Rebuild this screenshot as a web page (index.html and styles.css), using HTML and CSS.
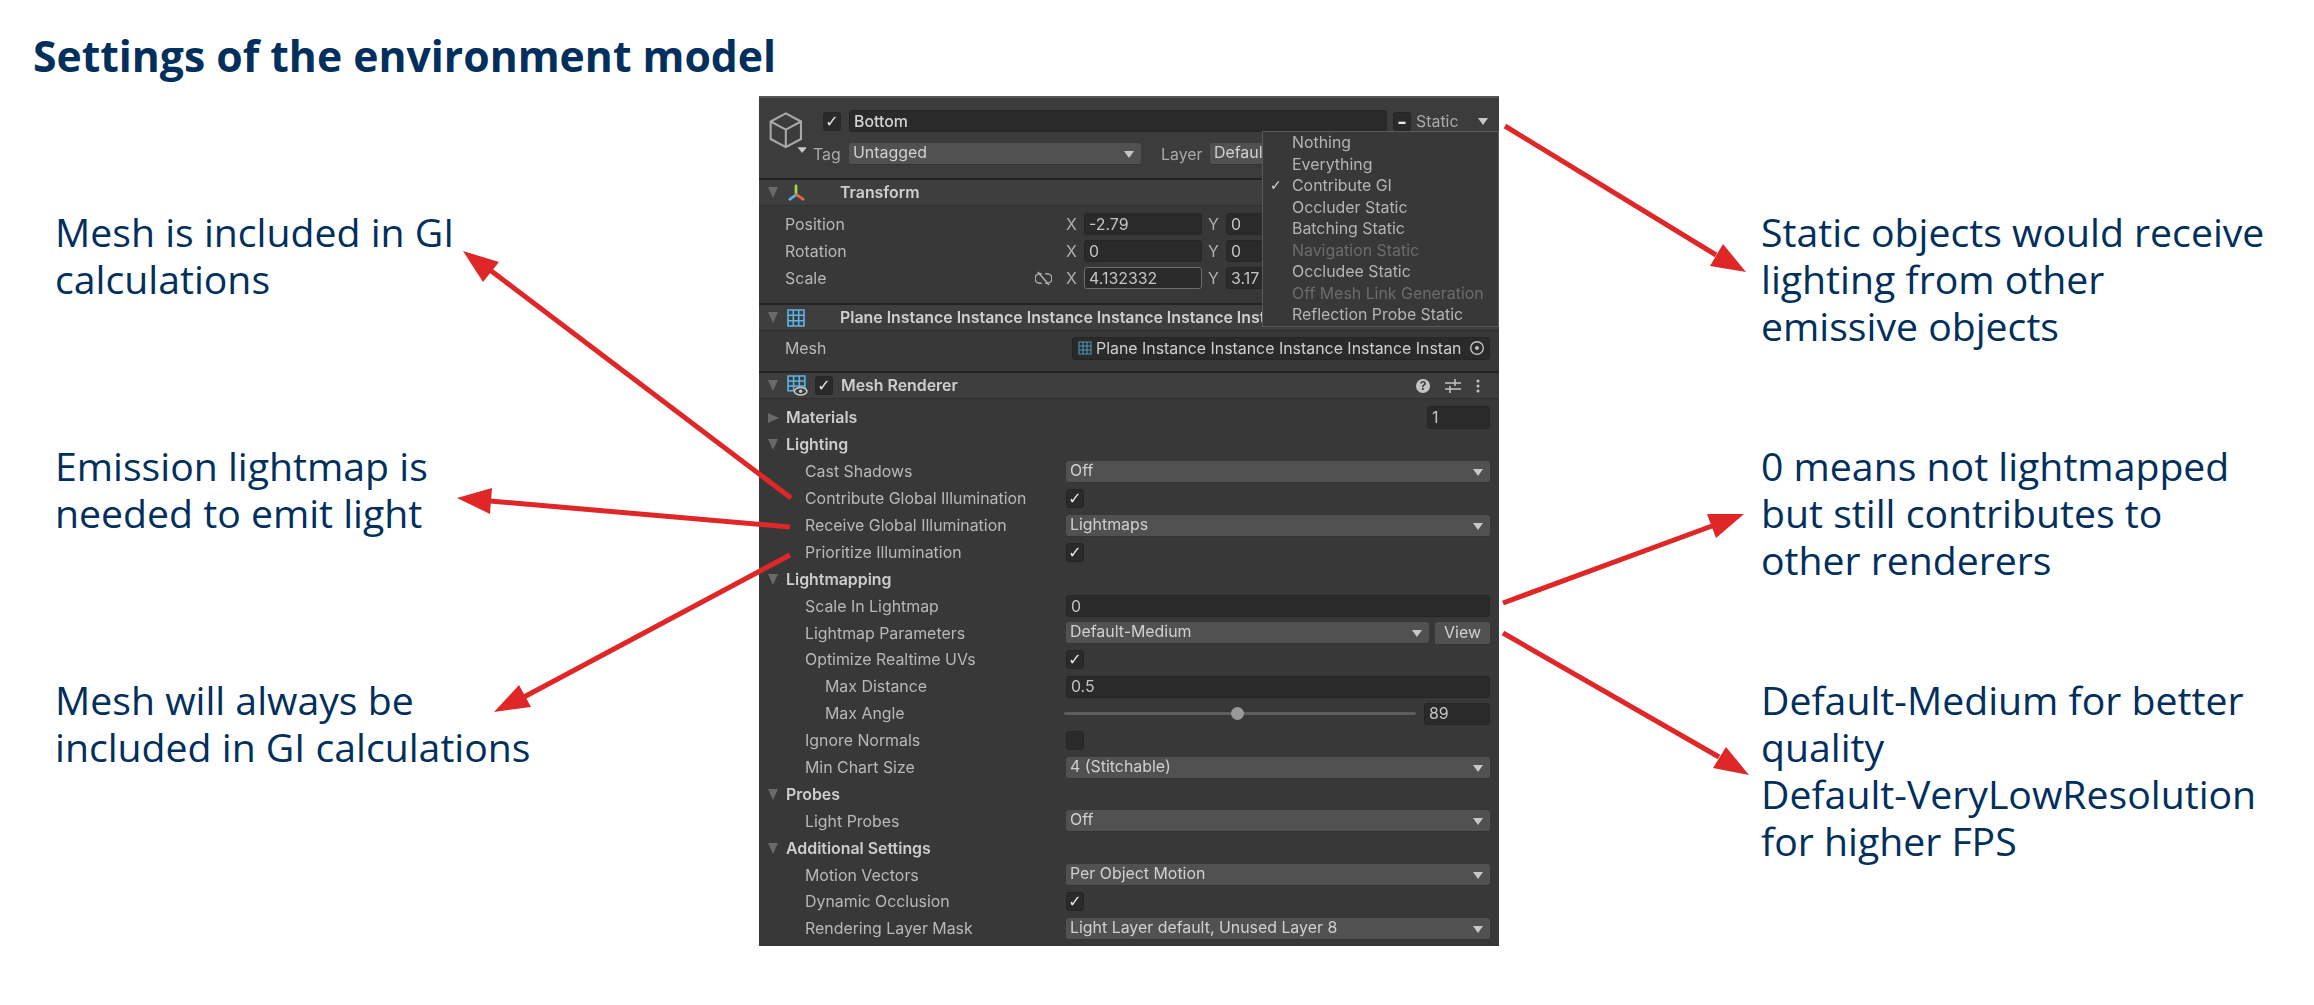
FILE: index.html
```html
<!DOCTYPE html>
<html lang="en">
<head>
  <meta charset="UTF-8" />
  <title>Settings of the environment model</title>
  <link rel="stylesheet" href="styles.css">
</head>
<body>
  <h1 class="title">Settings of the environment model</h1>

  <div class="content">
    <div class="notes notes-left">
      <p class="note">Mesh is included in GI<br>calculations</p>
      <p class="note">Emission lightmap is<br>needed to emit light</p>
      <p class="note">Mesh will always be<br>included in GI calculations</p>
    </div>

    <div class="panel">
      <div class="go-head">
        <svg class="go-icon" viewBox="0 0 32 36" fill="none" stroke="#a8a8a8" stroke-width="1.8">
          <path d="M15 2 L28 9 V24 L15 31 L2 24 V9 Z M2 9 L15 16 L28 9 M15 16 V31"/>
          <path d="M25 31 h8 l-4 5 z" fill="#c8c8c8" stroke="none"/>
        </svg>
        <div class="go-rows">
          <div class="go-row">
            <span class="check on">✓</span>
            <span class="input name-input">Bottom</span>
            <span class="check dash">–</span>
            <span class="static-label">Static</span>
            <span class="arrow-down static-arrow"></span>
          </div>
          <div class="go-row tag-row">
            <span class="tag-label">Tag</span>
            <span class="select tag-select">Untagged<i class="arrow-down"></i></span>
            <span class="layer-label">Layer</span>
            <span class="select layer-select">Default</span>
          </div>
        </div>
      </div>

      <div class="comp-head">
        <i class="fold"></i>
        <svg class="comp-icon" viewBox="0 0 20 20" fill="none" stroke-width="3" stroke-linecap="round">
          <path d="M10 2 V10" stroke="#a6d94c"/>
          <path d="M10 12 L3 17" stroke="#58b4e8"/>
          <path d="M11 12 L18 17" stroke="#e8683c"/>
        </svg>
        <span class="comp-title">Transform</span>
      </div>
      <div class="comp-body transform-body">
        <div class="row">
          <span class="label lvl1 tf-label">Position</span>
          <span class="axis">X</span><span class="input tf-input">-2.79</span>
          <span class="axis">Y</span><span class="input tf-input">0</span>
        </div>
        <div class="row">
          <span class="label lvl1 tf-label">Rotation</span>
          <span class="axis">X</span><span class="input tf-input">0</span>
          <span class="axis">Y</span><span class="input tf-input">0</span>
        </div>
        <div class="row">
          <span class="label lvl1 tf-label">Scale</span>
          <svg class="link-icon" viewBox="0 0 18 16" fill="none" stroke="#b0b0b0" stroke-width="1.6">
            <path d="M7 3 H5 a5 5 0 0 0 0 10 H7 M11 3 H13 a5 5 0 0 1 0 10 H11 M3 1 L15 15"/>
          </svg>
          <span class="axis">X</span><span class="input tf-input focused">4.132332</span>
          <span class="axis">Y</span><span class="input tf-input">3.17</span>
        </div>
      </div>

      <div class="comp-head">
        <i class="fold"></i>
        <svg class="comp-icon" viewBox="0 0 18 18" fill="none" stroke="#5db5e6" stroke-width="1.6">
          <path d="M1 1 H17 V17 H1 Z M1 6.3 H17 M1 11.7 H17 M6.3 1 V17 M11.7 1 V17"/>
        </svg>
        <span class="comp-title">Plane Instance Instance Instance Instance Instance Instance Instance</span>
      </div>
      <div class="comp-body mesh-body">
        <div class="row">
          <span class="label lvl1 mesh-label">Mesh</span>
          <span class="input object-field">
            <svg class="field-icon" viewBox="0 0 14 14" fill="none" stroke="#4f93b8" stroke-width="1.1">
              <path d="M1 1 H13 V13 H1 Z M1 5 H13 M1 9 H13 M5 1 V13 M9 1 V13"/>
            </svg>
            <span class="field-text">Plane Instance Instance Instance Instance Instan</span>
            <svg class="target-icon" viewBox="0 0 16 16" fill="none" stroke="#c0c0c0" stroke-width="1.4">
              <circle cx="8" cy="8" r="6.3"/><circle cx="8" cy="8" r="2" fill="#c0c0c0" stroke="none"/>
            </svg>
          </span>
        </div>
      </div>

      <div class="comp-head">
        <i class="fold"></i>
        <svg class="comp-icon renderer-icon" viewBox="0 0 20 20" fill="none" stroke="#5db5e6" stroke-width="1.5">
          <path d="M1 1 H17 V15 H1 Z M1 5.7 H17 M1 10.4 H17 M6.3 1 V15 M11.7 1 V15"/>
          <ellipse cx="13" cy="15.5" rx="6" ry="3.6" fill="#3e3e3e" stroke="#c8c8c8"/>
          <circle cx="13" cy="15.5" r="1.6" fill="#c8c8c8" stroke="none"/>
        </svg>
        <span class="check on head-check">✓</span>
        <span class="comp-title renderer-title">Mesh Renderer</span>
        <span class="head-tools">
          <svg viewBox="0 0 14 14"><circle cx="7" cy="7" r="7" fill="#c4c4c4"/><text x="7" y="11" class="help-mark">?</text></svg>
          <svg viewBox="0 0 16 14" fill="none" stroke="#c4c4c4" stroke-width="1.5"><path d="M0 4 H16 M0 10 H16 M10 0 V7 M5 7 V14"/></svg>
          <svg viewBox="0 0 4 14" fill="#c4c4c4"><circle cx="2" cy="2" r="1.5"/><circle cx="2" cy="7" r="1.5"/><circle cx="2" cy="12" r="1.5"/></svg>
        </span>
      </div>
      <div class="comp-body renderer-body">
        <div class="row"><i class="fold closed"></i><span class="label section">Materials</span><span class="input count-input">1</span></div>
        <div class="row"><i class="fold"></i><span class="label section">Lighting</span></div>
        <div class="row"><span class="label lvl1">Cast Shadows</span><span class="select wide">Off<i class="arrow-down"></i></span></div>
        <div class="row"><span class="label lvl1">Contribute Global Illumination</span><span class="check on">✓</span></div>
        <div class="row"><span class="label lvl1">Receive Global Illumination</span><span class="select wide">Lightmaps<i class="arrow-down"></i></span></div>
        <div class="row"><span class="label lvl1">Prioritize Illumination</span><span class="check on">✓</span></div>
        <div class="row"><i class="fold"></i><span class="label section">Lightmapping</span></div>
        <div class="row"><span class="label lvl1">Scale In Lightmap</span><span class="input wide">0</span></div>
        <div class="row"><span class="label lvl1">Lightmap Parameters</span><span class="select wide">Default-Medium<i class="arrow-down"></i></span><span class="view-btn">View</span></div>
        <div class="row"><span class="label lvl1">Optimize Realtime UVs</span><span class="check on">✓</span></div>
        <div class="row"><span class="label lvl2">Max Distance</span><span class="input wide">0.5</span></div>
        <div class="row"><span class="label lvl2">Max Angle</span><span class="slider"><i class="thumb"></i></span><span class="input angle-input">89</span></div>
        <div class="row"><span class="label lvl1">Ignore Normals</span><span class="check"></span></div>
        <div class="row"><span class="label lvl1">Min Chart Size</span><span class="select wide">4 (Stitchable)<i class="arrow-down"></i></span></div>
        <div class="row"><i class="fold"></i><span class="label section">Probes</span></div>
        <div class="row"><span class="label lvl1">Light Probes</span><span class="select wide">Off<i class="arrow-down"></i></span></div>
        <div class="row"><i class="fold"></i><span class="label section">Additional Settings</span></div>
        <div class="row"><span class="label lvl1">Motion Vectors</span><span class="select wide">Per Object Motion<i class="arrow-down"></i></span></div>
        <div class="row"><span class="label lvl1">Dynamic Occlusion</span><span class="check on">✓</span></div>
        <div class="row"><span class="label lvl1">Rendering Layer Mask</span><span class="select wide">Light Layer default, Unused Layer 8<i class="arrow-down"></i></span></div>
      </div>

      <ul class="static-menu">
        <li>Nothing</li>
        <li>Everything</li>
        <li class="ticked">Contribute GI</li>
        <li>Occluder Static</li>
        <li>Batching Static</li>
        <li class="disabled">Navigation Static</li>
        <li>Occludee Static</li>
        <li class="disabled">Off Mesh Link Generation</li>
        <li>Reflection Probe Static</li>
      </ul>
    </div>

    <div class="notes notes-right">
      <p class="note">Static objects would receive<br>lighting from other<br>emissive objects</p>
      <p class="note">0 means not lightmapped<br>but still contributes to<br>other renderers</p>
      <p class="note">Default-Medium for better<br>quality<br>Default-VeryLowResolution<br>for higher FPS</p>
    </div>
  </div>

  <svg class="callouts" viewBox="0 0 2314 1005">
    <g class="callout">
      <path d="M791 498 L490 270"/><polygon points="463,251 499,262 483,282"/>
      <path d="M790 527 L490 501"/><polygon points="457,498 492,488 490,514"/>
      <path d="M790 555 L524 697"/><polygon points="494,712 519,685 531,707"/>
      <path d="M1505 126 L1716 255"/><polygon points="1746,272 1723,244 1710,266"/>
      <path d="M1503 603 L1712 526"/><polygon points="1744,514 1707,514 1716,538"/>
      <path d="M1503 633 L1719 757"/><polygon points="1749,775 1726,747 1713,768"/>
    </g>
  </svg>
</body>
</html>
```

FILE: styles.css
```css
html, body {
  margin: 0;
  height: 100%;
}
body {
  position: relative;
  background: #fff;
  color: #022f5c;
  font-family: "Open Sans", sans-serif;
  overflow: hidden;
}
.title {
  margin: 0;
  padding: 32px 0 0 33px;
  height: 63px;
  box-sizing: border-box;
  font-size: 42.7px;
  line-height: 48px;
  font-weight: 700;
}
.content {
  display: flex;
  align-items: flex-start;
  padding-top: 33px;
}
.notes {
  flex: none;
  padding-top: 113px;
}
.notes-left {
  width: 759px;
  padding-left: 55px;
  box-sizing: border-box;
}
.notes-right {
  padding-left: 262px;
}
.note {
  margin: 0;
  height: 234px;
  font-size: 39.2px;
  line-height: 46.9px;
  white-space: nowrap;
}

/* inspector */
.panel {
  position: relative;
  flex: none;
  width: 740px;
  height: 850px;
  box-sizing: border-box;
  background: #383838;
  border-top: 2px solid #555;
  font-family: Inter, sans-serif;
  font-size: 15.9px;
  color: #c4c4c4;
  filter: blur(0.5px);
  overflow: hidden;
}
.go-head {
  display: flex;
  height: 80px;
  box-sizing: border-box;
  padding: 11px 0 0 9px;
  background: #3c3c3c;
}
.go-icon {
  flex: none;
  width: 38px;
  height: 42px;
  margin: 2px 17px 0 0;
}
.go-rows {
  flex: 1;
  min-width: 0;
}
.go-row {
  display: flex;
  align-items: center;
  height: 24px;
}
.tag-row {
  height: 22px;
  margin-top: 10px;
  margin-left: -10px;
}
.tag-label {
  width: 36px;
  color: #aaa;
}
.tag-select {
  width: 292px;
}
.layer-label {
  margin-left: 20px;
  width: 49px;
  color: #aaa;
}
.layer-select {
  width: 90px;
}
.name-input {
  width: 538px;
  margin-left: 8px;
  height: 24px;
  font-weight: 500;
  color: #d2d2d2;
}
.check.dash {
  margin-left: 6px;
  font-size: 18px;
}
.static-label {
  margin-left: 5px;
  width: 62px;
  color: #aaa;
}
.static-arrow {
  position: static;
  margin-left: 0;
}

.comp-head {
  display: flex;
  align-items: center;
  height: 28px;
  box-sizing: border-box;
  padding-left: 9px;
  border-top: 2px solid #232323;
  border-bottom: 1px solid #303030;
  background: #3e3e3e;
}
.comp-icon {
  flex: none;
  width: 18px;
  height: 18px;
  margin-left: 9px;
}
.renderer-icon {
  width: 21px;
  height: 21px;
}
.comp-title {
  margin-left: 35px;
  font-weight: 600;
  color: #cfcfcf;
  white-space: nowrap;
}
.comp-title.renderer-title {
  margin-left: 8px;
}
.head-check {
  margin-left: 7px;
}
.head-tools {
  display: flex;
  align-items: center;
  gap: 15px;
  margin-left: auto;
  padding-right: 19px;
}
.head-tools svg {
  height: 14px;
  width: auto;
}
.help-mark {
  font-size: 12px;
  font-weight: 700;
  fill: #3e3e3e;
  text-anchor: middle;
}
.comp-body {
  box-sizing: border-box;
}
.transform-body {
  height: 97px;
  padding-top: 5px;
}
.mesh-body {
  height: 40px;
  padding-top: 4px;
}
.renderer-body {
  padding-top: 5.5px;
}

.row {
  position: relative;
  display: flex;
  align-items: center;
  height: 26.9px;
}
.label {
  flex: none;
  width: 307px;
  box-sizing: border-box;
  white-space: nowrap;
  color: #b8b8b8;
}
.section {
  padding-left: 27px;
  font-weight: 600;
  color: #cdcdcd;
}
.lvl1 {
  padding-left: 46px;
}
.lvl2 {
  padding-left: 66px;
}
.tf-label, .mesh-label {
  padding-left: 26px;
}
.mesh-label {
  width: 313px;
}

.input, .select {
  display: flex;
  align-items: center;
  height: 22px;
  box-sizing: border-box;
  padding-left: 4px;
  border-radius: 3px;
  white-space: nowrap;
  overflow: hidden;
}
.input {
  background: #2a2a2a;
  border: 1px solid #252525;
}
.select {
  position: relative;
  padding-bottom: 2px;
  background: #515151;
  border-bottom: 1px solid #333;
  color: #d0d0d0;
}
.wide {
  flex: 1;
  margin-right: 9px;
}
.wide + .view-btn {
  margin-left: -3px;
}
.view-btn {
  flex: none;
  width: 55px;
  height: 22px;
  margin-right: 9px;
  border-radius: 3px;
  background: #515151;
  border-bottom: 1px solid #333;
  line-height: 21px;
  text-align: center;
  color: #d0d0d0;
}
.axis {
  flex: none;
  width: 18px;
  color: #b0b0b0;
}
.tf-input {
  flex: none;
  width: 118px;
  margin-right: 6px;
}
.focused {
  border-color: #6e6e6e;
}
.link-icon {
  position: absolute;
  left: 276px;
  top: 6px;
  width: 17px;
  height: 15px;
}
.object-field {
  flex: 1;
  height: 23px;
  margin-right: 9px;
  padding-left: 5px;
  gap: 4px;
}
.field-icon {
  flex: none;
  width: 14px;
  height: 14px;
}
.field-text {
  flex: 1;
  overflow: hidden;
  color: #cfcfcf;
}
.target-icon {
  flex: none;
  width: 16px;
  height: 16px;
  margin-right: 4px;
}
.count-input {
  width: 63px;
  margin-left: auto;
  margin-right: 9px;
  height: 23px;
}
.angle-input {
  flex: none;
  width: 66px;
  margin-right: 9px;
}
.check {
  flex: none;
  display: flex;
  align-items: center;
  justify-content: center;
  width: 18px;
  height: 19px;
  border-radius: 3px;
  background: #2a2a2a;
  border: 1px solid #252525;
  box-sizing: border-box;
  color: #e8e8e8;
  font-family: "DejaVu Sans", sans-serif;
  font-size: 16px;
  font-weight: 700;
}
.slider {
  position: relative;
  flex: none;
  width: 352px;
  height: 3px;
  margin: 0 8px 0 -2px;
  background: #5e5e5e;
  border-radius: 2px;
}
.thumb {
  position: absolute;
  left: 167px;
  top: -5px;
  width: 13px;
  height: 13px;
  border-radius: 50%;
  background: #999;
}

.fold {
  position: absolute;
  left: 9px;
  width: 0;
  height: 0;
  border-left: 5.5px solid transparent;
  border-right: 5.5px solid transparent;
  border-top: 11px solid #6a6a6a;
}
.comp-head .fold {
  position: static;
  flex: none;
}
.fold.closed {
  border: 0;
  border-top: 5.5px solid transparent;
  border-bottom: 5.5px solid transparent;
  border-left: 11px solid #6a6a6a;
}
.arrow-down {
  flex: none;
  width: 0;
  height: 0;
  border-left: 5px solid transparent;
  border-right: 5px solid transparent;
  border-top: 7px solid #c8c8c8;
}
.select .arrow-down {
  position: absolute;
  right: 7px;
  top: 8px;
}

.static-menu {
  position: absolute;
  top: 33px;
  right: 0;
  width: 237px;
  height: 196px;
  box-sizing: border-box;
  margin: 0;
  padding: 0 0 0 29px;
  list-style: none;
  background: #383838;
  border: 1px solid #595959;
  color: #b4b4b4;
}
.static-menu li {
  position: relative;
  height: 21.5px;
  line-height: 21.5px;
  white-space: nowrap;
}
.static-menu .disabled {
  color: #6c6c6c;
}
.ticked::before {
  content: "✓";
  position: absolute;
  left: -22px;
  font-family: "DejaVu Sans", sans-serif;
  font-size: 14px;
  font-weight: 700;
  color: #d8d8d8;
}

/* red arrows over everything */
.callouts {
  position: absolute;
  left: 0;
  top: 0;
  width: 2314px;
  height: 1005px;
  pointer-events: none;
}
.callout path {
  fill: none;
  stroke: #e02727;
  stroke-width: 5;
}
.callout polygon {
  fill: #e02727;
}
```
